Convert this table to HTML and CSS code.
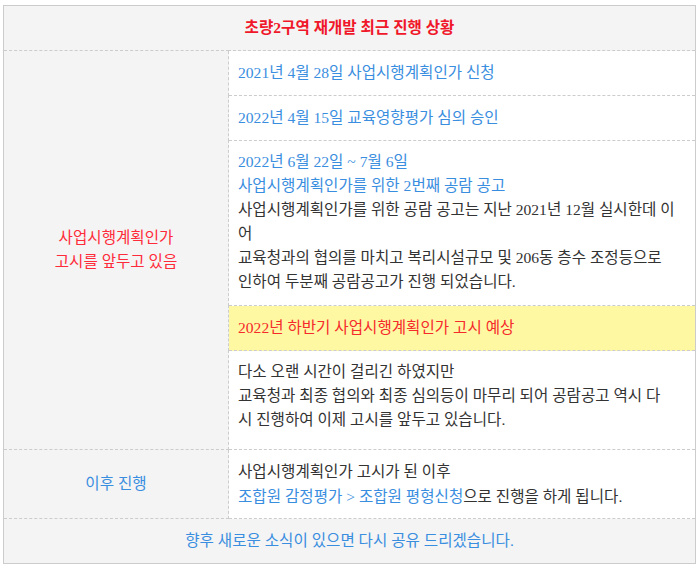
FILE: index.html
```html
<!DOCTYPE html>
<html lang="ko">
<head>
<meta charset="utf-8">
<title>초량2구역 재개발 최근 진행 상황</title>
<link rel="stylesheet" href="styles.css">
</head>
<body>
<div class="wrap">
<table class="status">
  <colgroup><col class="c-left"><col class="c-right"></colgroup>
  <tr>
    <td colspan="2" class="title">초량2구역 재개발 최근 진행 상황</td>
  </tr>
  <tr>
    <td rowspan="5" class="side red">사업시행계획인가<br>고시를 앞두고 있음</td>
    <td class="item blue">2021년 4월 28일 사업시행계획인가 신청</td>
  </tr>
  <tr>
    <td class="item blue">2022년 4월 15일 교육영향평가 심의 승인</td>
  </tr>
  <tr>
    <td class="item long"><span class="blue">2022년 6월 22일 ~ 7월 6일<br>사업시행계획인가를 위한 2번째 공람 공고</span><br>사업시행계획인가를 위한 공람 공고는 지난 2021년 12월 실시한데 이<br>어<br>교육청과의 협의를 마치고 복리시설규모 및 206동 층수 조정등으로<br>인하여 두분째 공람공고가 진행 되었습니다.</td>
  </tr>
  <tr>
    <td class="item highlight">2022년 하반기 사업시행계획인가 고시 예상</td>
  </tr>
  <tr>
    <td class="item note">다소 오랜 시간이 걸리긴 하였지만<br>교육청과 최종 협의와 최종 심의등이 마무리 되어 공람공고 역시 다<br>시 진행하여 이제 고시를 앞두고 있습니다.</td>
  </tr>
  <tr>
    <td class="side blue">이후 진행</td>
    <td class="item next">사업시행계획인가 고시가 된 이후<br><span class="blue">조합원 감정평가 &gt; 조합원 평형신청</span>으로 진행을 하게 됩니다.</td>
  </tr>
  <tr>
    <td colspan="2" class="footer blue">향후 새로운 소식이 있으면 다시 공유 드리겠습니다.</td>
  </tr>
</table>
</div>
</body>
</html>
```
FILE: styles.css
```css
html, body {
  margin: 0;
  padding: 0;
  background: #ffffff;
}
body {
  font-family: "Liberation Serif", "Noto Sans CJK KR", sans-serif;
  font-size: 15.6px;
  color: #333333;
}
.wrap {
  padding: 5px 0 0 3px;
}
.status {
  width: 693px;
  table-layout: fixed;
  border-collapse: collapse;
  border: 1px solid #cccccc;
}
.c-left { width: 225px; }
.status td {
  border: 1px dashed #cccccc;
  padding: 10px 9px;
  line-height: 24px;
  vertical-align: middle;
}
.title {
  background: #f4f4f4;
  text-align: center;
  font-weight: bold;
  color: #f0172a;
}
.side {
  background: #f4f4f4;
  text-align: center;
}
.blue { color: #3a8ee0; }
.red { color: #ff2b3a; }
.status td.long {
  padding-top: 9px;
  padding-bottom: 11px;
}
.status td.highlight {
  background: #fff8a3;
  color: #f52a2a;
}
.status td.note {
  padding-top: 9px;
  padding-bottom: 17px;
}
.status td.next {
  padding-top: 9px;
  padding-bottom: 9px;
  line-height: 25px;
}
.footer {
  background: #f4f4f4;
  text-align: center;
}
```
